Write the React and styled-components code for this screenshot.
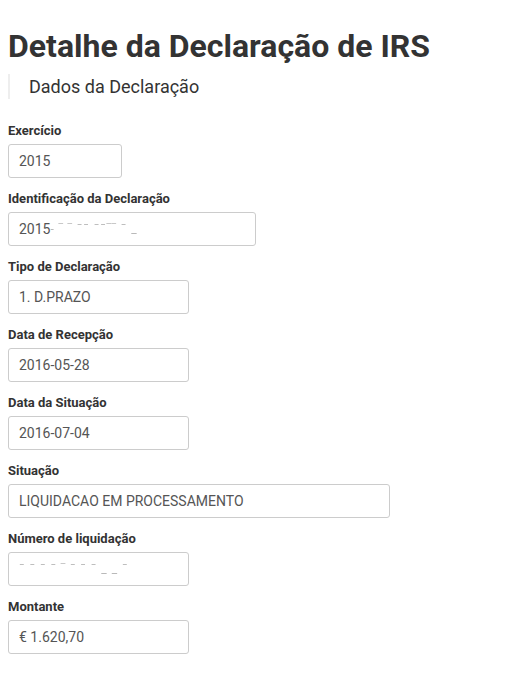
import styled, { createGlobalStyle } from "styled-components"

const GlobalStyle = createGlobalStyle`
  body {
    margin: 0;
    background: #fff;
    font-family: Roboto, "Liberation Sans", Arial, sans-serif;
    color: #333;
  }
`

const Page = styled.div`
  padding: 0 8px 30px 8px;
`

const Title = styled.h1`
  margin: 28px 0 10px 0;
  font-size: 32px;
  line-height: 36px;
  font-weight: 700;
  color: #333;
`

const Subtitle = styled.div`
  border-left: 2px solid #eee;
  padding-left: 19px;
  font-size: 18px;
  line-height: 25px;
  color: #333;
  margin-bottom: 23px;
`

const Group = styled.div`
  margin-bottom: 12px;
`

const Label = styled.label`
  display: block;
  font-size: 13px;
  line-height: 17px;
  font-weight: 700;
  color: #333;
  margin-bottom: 5px;
`

const Field = styled.div`
  box-sizing: border-box;
  width: ${(p) => p.$w}px;
  height: 34px;
  padding: 0 10px;
  border: 1px solid #ccc;
  border-radius: 3px;
  display: flex;
  align-items: center;
  font-size: 14px;
  color: #555;
  white-space: nowrap;
  overflow: hidden;
`

const Hidden = styled.span`
  color: #b8b8b8;
  filter: blur(0.7px);
  letter-spacing: 1px;
  font-size: 12px;
`

const fields = [
  { label: "Exercício", value: "2015", w: 114 },
  {
    label: "Identificação da Declaração",
    value: (
      <>
        2015<Hidden>- ‾ ‾ ˉˉ ˉˉ‾‾ ˉ _</Hidden>
      </>
    ),
    w: 248,
  },
  { label: "Tipo de Declaração", value: "1. D.PRAZO", w: 181 },
  { label: "Data de Recepção", value: "2016-05-28", w: 181 },
  { label: "Data da Situação", value: "2016-07-04", w: 181 },
  { label: "Situação", value: "LIQUIDACAO EM PROCESSAMENTO", w: 382 },
  {
    label: "Número de liquidação",
    value: <Hidden>ˉ ˉ ˉ ˉ ‾ ˉ ˉ ˉ _ _ ˉ</Hidden>,
    w: 181,
  },
  { label: "Montante", value: "€ 1.620,70", w: 181 },
]

const App = () => {
  return (
    <Page>
      <GlobalStyle />
      <Title>Detalhe da Declaração de IRS</Title>
      <Subtitle>Dados da Declaração</Subtitle>
      {fields.map((f) => (
        <Group key={f.label}>
          <Label>{f.label}</Label>
          <Field $w={f.w}>{f.value}</Field>
        </Group>
      ))}
    </Page>
  )
}

export default App
